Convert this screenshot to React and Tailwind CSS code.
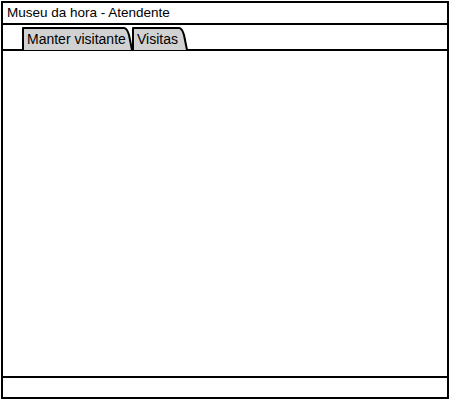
import React from "react";

function Tab({ label, width, textPad }) {
  const w = width;
  const h = 23;
  return (
    <div className="relative h-[23px] flex items-center" style={{ width: w }}>
      <svg className="absolute inset-0" width={w} height={h} viewBox={`0 0 ${w} ${h}`}>
        <path
          d={`M1,${h} L1,1 L${w - 9},1 Q${w - 6},1 ${w - 4},8 L${w - 1},${h}`}
          fill="#d1d1d1"
          stroke="#000"
          strokeWidth="2"
          strokeLinejoin="round"
        />
      </svg>
      <span
        className="relative text-[14px] leading-none text-black pt-[1px]"
        style={{ paddingLeft: textPad }}
      >
        {label}
      </span>
    </div>
  );
}

export default function App() {
  return (
    <div className="w-[450px] h-[400px] bg-white p-[1px]" style={{ fontFamily: '"Liberation Sans", Arial, sans-serif' }}>
      <div className="h-full border-2 border-black flex flex-col">
        <div className="h-[20px] border-b-2 border-black box-content flex items-center pl-[4px]">
          <span className="text-[13.5px] leading-none text-black">Museu da hora - Atendente</span>
        </div>
        <div className="h-[24px] box-content border-b-2 border-black flex items-end pl-[19px]">
          <div className="flex items-end -mb-[1px]">
            <Tab label="Manter visitante" width={111} textPad={5} />
            <div className="-ml-[1px]">
              <Tab label="Visitas" width={56} textPad={5} />
            </div>
          </div>
        </div>
        <div className="flex-1 border-b-2 border-black"></div>
        <div className="h-[19px]"></div>
      </div>
    </div>
  );
}
